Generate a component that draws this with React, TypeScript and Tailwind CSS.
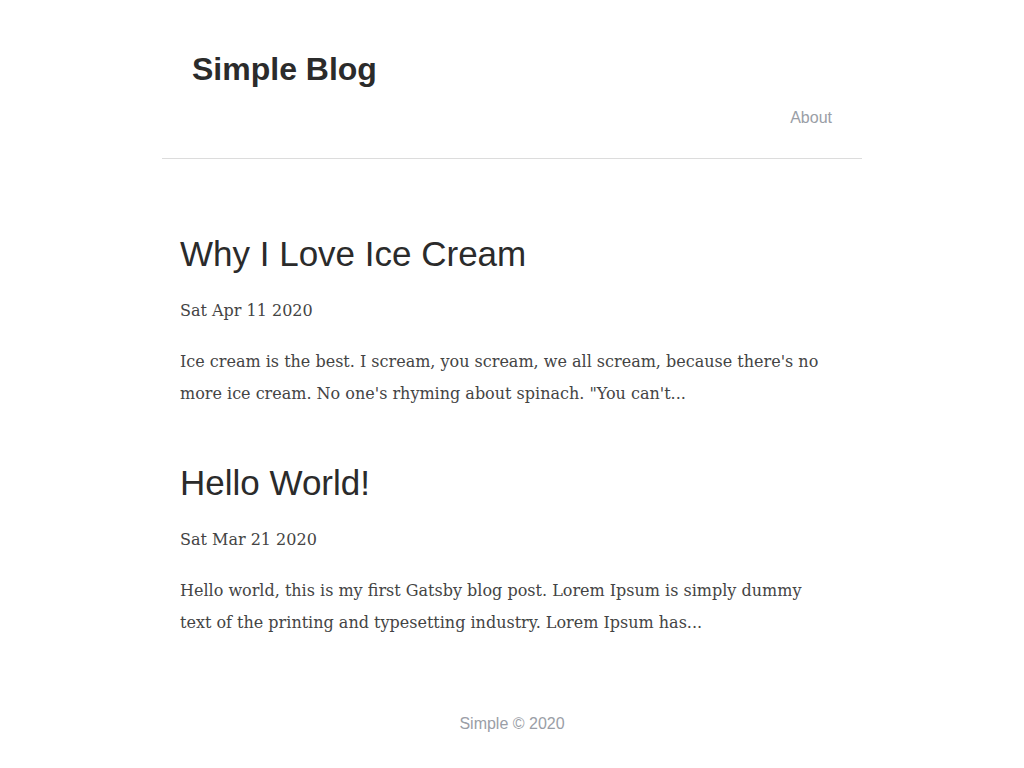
const posts = [
  {
    title: "Why I Love Ice Cream",
    date: "Sat Apr 11 2020",
    excerpt:
      "Ice cream is the best. I scream, you scream, we all scream, because there's no more ice cream. No one's rhyming about spinach. \"You can't...",
  },
  {
    title: "Hello World!",
    date: "Sat Mar 21 2020",
    excerpt:
      "Hello world, this is my first Gatsby blog post. Lorem Ipsum is simply dummy text of the printing and typesetting industry. Lorem Ipsum has...",
  },
];

const App = () => {
  return (
    <div className="min-h-screen bg-white font-['Liberation_Sans',Arial,sans-serif]">
      <div className="w-[700px] mx-auto">
        <header className="pt-[48px] pb-[28px] px-[30px] border-b border-[#dcdcdc]">
          <h1 className="text-[32px] font-bold leading-[42px] text-[#2b2b2b]">Simple Blog</h1>
          <nav className="flex justify-end mt-[16px]">
            <a className="text-[16px] leading-[24px] text-[#9a9ea6]">About</a>
          </nav>
        </header>
        <main className="pt-[73px] pl-[18px] pr-[30px]">
          {posts.map((post) => (
            <article key={post.title} className="mb-[51px]">
              <h2 className="text-[35px] leading-[44px] text-[#2b2b2b]">{post.title}</h2>
              <div className="mt-[23px] text-[16px] leading-[24px] text-[#444] font-['DejaVu_Serif',Georgia,serif]">
                {post.date}
              </div>
              <p className="mt-[23px] text-[16px] leading-[32px] text-[#444] font-['DejaVu_Serif',Georgia,serif]">
                {post.excerpt}
              </p>
            </article>
          ))}
        </main>
        <footer className="pt-[22px] pb-[30px] text-center text-[16px] text-[#9a9ea6]">Simple © 2020</footer>
      </div>
    </div>
  );
};

export default App;
